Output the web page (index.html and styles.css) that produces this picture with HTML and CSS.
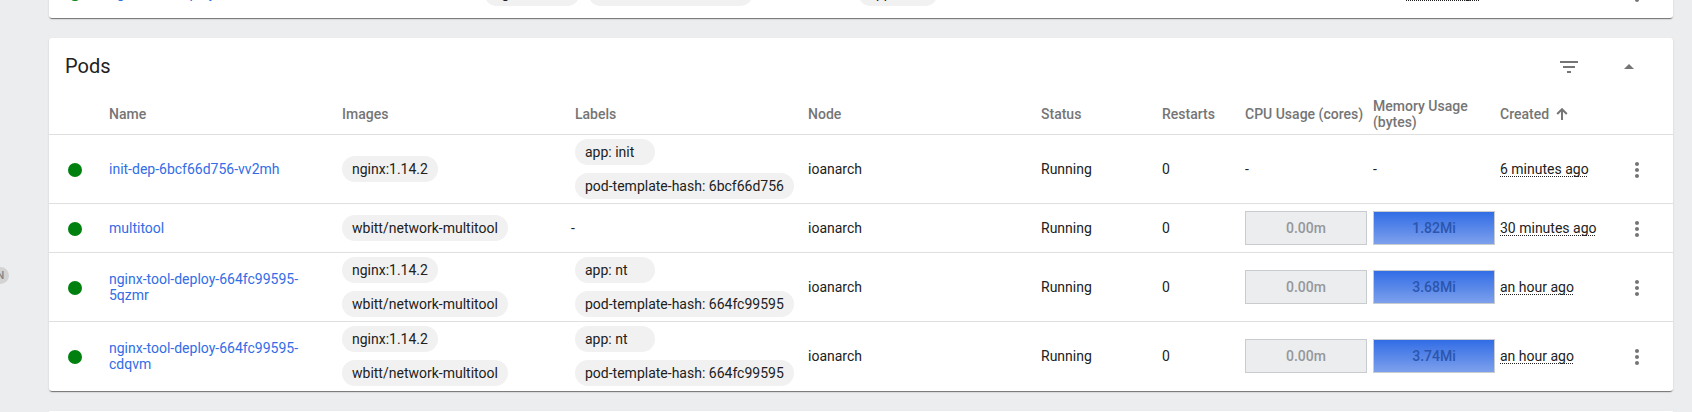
FILE: index.html
```html
<!DOCTYPE html>
<html lang="en">
<head>
<meta charset="utf-8">
<title>Pods</title>
<link rel="stylesheet" href="styles.css">
</head>
<body>
<svg class="sprite" aria-hidden="true">
  <symbol id="more" viewBox="0 0 24 24"><path d="M12 8c1.1 0 2-.9 2-2s-.9-2-2-2-2 .9-2 2 .9 2 2 2zm0 2c-1.1 0-2 .9-2 2s.9 2 2 2 2-.9 2-2-.9-2-2-2zm0 6c-1.1 0-2 .9-2 2s.9 2 2 2 2-.9 2-2-.9-2-2-2z"/></symbol>
  <symbol id="filter" viewBox="0 0 24 24"><path d="M10 18h4v-2h-4v2zM3 6v2h18V6H3zm3 7h12v-2H6v2z"/></symbol>
  <symbol id="collapse" viewBox="0 0 24 24"><path d="M7 14l5-5 5 5z"/></symbol>
  <symbol id="sort" viewBox="0 0 12 12"><path d="M6 12V1.5M1.2 6L6 1.2 10.8 6" fill="none" stroke="currentColor" stroke-width="2"/></symbol>
</svg>
<aside class="sidebar"><span class="badge">N</span></aside>
<main class="content">
  <section class="card card-previous" aria-label="Deployments">
    <table class="grid">
      <colgroup><col class="c-icon"><col><col><col><col class="c-pods"><col class="c-created-wide"><col class="c-menu"></colgroup>
      <tbody>
        <tr>
          <td><span class="dot"></span></td>
          <td class="name"><a href="#">nginx-tool-deploy</a></td>
          <td><div class="chips"><span class="chip">nginx:1.14.2</span><span class="chip">wbitt/network-multitool</span></div></td>
          <td><div class="chips"><span class="chip">app: nt</span></div></td>
          <td></td>
          <td><span class="time">an hour ago</span></td>
          <td><button class="icon-button" aria-label="Actions"><svg class="icon"><use href="#more"/></svg></button></td>
        </tr>
      </tbody>
    </table>
  </section>

  <section class="card">
    <header class="card-header">
      <h2 class="card-title">Pods</h2>
      <div class="card-actions">
        <button class="icon-button" aria-label="Filter"><svg class="icon"><use href="#filter"/></svg></button>
        <button class="icon-button" aria-label="Collapse"><svg class="icon"><use href="#collapse"/></svg></button>
      </div>
    </header>
    <table class="grid">
      <colgroup><col class="c-icon"><col><col><col><col><col class="c-status"><col class="c-restarts"><col class="c-cpu"><col class="c-memory"><col class="c-created"><col class="c-menu"></colgroup>
      <thead>
        <tr>
          <th></th><th>Name</th><th>Images</th><th>Labels</th><th>Node</th><th>Status</th><th>Restarts</th><th>CPU Usage (cores)</th><th>Memory Usage (bytes)</th>
          <th><button class="sort">Created<svg class="sort-icon"><use href="#sort"/></svg></button></th><th></th>
        </tr>
      </thead>
      <tbody>
        <tr>
          <td><span class="dot"></span></td>
          <td class="name"><a href="#">init-dep-6bcf66d756-vv2mh</a></td>
          <td><div class="chips"><span class="chip">nginx:1.14.2</span></div></td>
          <td><div class="chips"><span class="chip">app: init</span><span class="chip">pod-template-hash: 6bcf66d756</span></div></td>
          <td>ioanarch</td><td>Running</td><td>0</td><td>-</td><td>-</td>
          <td><span class="time">6 minutes ago</span></td>
          <td><button class="icon-button" aria-label="Actions"><svg class="icon"><use href="#more"/></svg></button></td>
        </tr>
        <tr>
          <td><span class="dot"></span></td>
          <td class="name"><a href="#">multitool</a></td>
          <td><div class="chips"><span class="chip">wbitt/network-multitool</span></div></td>
          <td><div class="chips">-</div></td>
          <td>ioanarch</td><td>Running</td><td>0</td>
          <td><div class="usage">0.00m</div></td><td><div class="usage usage-memory">1.82Mi</div></td>
          <td><span class="time">30 minutes ago</span></td>
          <td><button class="icon-button" aria-label="Actions"><svg class="icon"><use href="#more"/></svg></button></td>
        </tr>
        <tr>
          <td><span class="dot"></span></td>
          <td class="name"><a href="#">nginx-tool-deploy-664fc99595-5qzmr</a></td>
          <td><div class="chips"><span class="chip">nginx:1.14.2</span><span class="chip">wbitt/network-multitool</span></div></td>
          <td><div class="chips"><span class="chip">app: nt</span><span class="chip">pod-template-hash: 664fc99595</span></div></td>
          <td>ioanarch</td><td>Running</td><td>0</td>
          <td><div class="usage">0.00m</div></td><td><div class="usage usage-memory">3.68Mi</div></td>
          <td><span class="time">an hour ago</span></td>
          <td><button class="icon-button" aria-label="Actions"><svg class="icon"><use href="#more"/></svg></button></td>
        </tr>
        <tr>
          <td><span class="dot"></span></td>
          <td class="name"><a href="#">nginx-tool-deploy-664fc99595-cdqvm</a></td>
          <td><div class="chips"><span class="chip">nginx:1.14.2</span><span class="chip">wbitt/network-multitool</span></div></td>
          <td><div class="chips"><span class="chip">app: nt</span><span class="chip">pod-template-hash: 664fc99595</span></div></td>
          <td>ioanarch</td><td>Running</td><td>0</td>
          <td><div class="usage">0.00m</div></td><td><div class="usage usage-memory">3.74Mi</div></td>
          <td><span class="time">an hour ago</span></td>
          <td><button class="icon-button" aria-label="Actions"><svg class="icon"><use href="#more"/></svg></button></td>
        </tr>
      </tbody>
    </table>
  </section>

  <section class="card card-next" aria-label="Replica Sets"></section>
</main>
</body>
</html>
```
FILE: styles.css
```css
* { box-sizing: border-box; }

body {
  margin: 0;
  display: flex;
  height: 100vh;
  overflow: hidden;
  background: #ecedef;
  color: #212121;
  font: 14px/16px Roboto, sans-serif;
}

.sprite { display: none; }

.sidebar {
  flex: none;
  display: flex;
  justify-content: flex-end;
  align-items: flex-start;
  width: 9px;
  padding-top: 267px;
  overflow: hidden;
}

.badge {
  flex: none;
  width: 17px;
  height: 17px;
  border-radius: 50%;
  background: #d3d3d4;
  color: #858585;
  font-size: 11px;
  font-weight: 500;
  line-height: 17px;
  text-align: center;
}

.content {
  flex: 1;
  display: flex;
  flex-direction: column;
  gap: 20px;
  min-width: 0;
  padding: 0 19px 0 40px;
}

.card {
  flex: none;
  border-radius: 3px;
  background: #fff;
  box-shadow: 0 2px 1px -1px rgba(0, 0, 0, .4), 0 1px 1px rgba(0, 0, 0, .14), 0 1px 3px rgba(0, 0, 0, .08);
}

.card-previous { margin-top: -31px; }

.card-next { flex: 1; border-radius: 3px 3px 0 0; }

.card-header {
  display: flex;
  justify-content: space-between;
  align-items: center;
  height: 56px;
  padding: 0 32px 0 16px;
}

.card-title {
  margin: 0;
  font-size: 20px;
  font-weight: 400;
  line-height: 24px;
}

.card-actions { display: flex; gap: 36px; }

.icon-button {
  display: block;
  padding: 2px 0 0;
  border: 0;
  background: none;
  color: #757575;
  cursor: pointer;
}

.icon { display: block; width: 24px; height: 24px; fill: currentColor; }

.grid {
  width: 100%;
  border-collapse: separate;
  border-spacing: 0;
  table-layout: fixed;
}

.c-icon { width: 60px; }
.c-pods { width: 173px; }
.c-created-wide { width: 219px; }
.c-status { width: 121px; }
.c-restarts { width: 83px; }
.c-cpu { width: 128px; }
.c-memory { width: 127px; }
.c-created { width: 125px; }
.c-menu { width: 48px; }

.grid th,
.grid td {
  height: 49px;
  padding: 0;
  border-bottom: 1px solid #dfdfdf;
  text-align: left;
  vertical-align: middle;
}

.grid th { height: 41px; color: #757575; font-weight: 500; }

.grid tbody tr:last-child td { border-bottom-color: transparent; }

.grid .name { padding-right: 24px; }

.grid a { color: #326de6; text-decoration: none; }

.sort {
  display: flex;
  align-items: center;
  gap: 7px;
  padding: 0;
  border: 0;
  background: none;
  color: inherit;
  font: inherit;
  cursor: pointer;
}

.sort-icon { width: 12px; height: 12px; }

.dot {
  display: block;
  width: 14px;
  height: 14px;
  margin: 2px 0 0 19px;
  border-radius: 50%;
  background: #00800f;
}

.chips { display: flex; flex-wrap: wrap; margin: 0 -4px; }

.chip {
  min-width: 80px;
  margin: 4px;
  padding: 5px 10px;
  border-radius: 13px;
  background: #f1f1f1;
  white-space: nowrap;
}

.time {
  text-decoration: underline dotted 1px;
  text-decoration-skip-ink: none;
  text-underline-offset: 2px;
}

.usage {
  width: 122px;
  height: 34px;
  border: 1px solid #c9cccf;
  background: #ecedef;
  color: #969799;
  font-weight: 500;
  line-height: 32px;
  text-align: center;
}

.usage-memory {
  background: linear-gradient(#326de6, #7da0ec);
  color: #2c56ae;
}
```
